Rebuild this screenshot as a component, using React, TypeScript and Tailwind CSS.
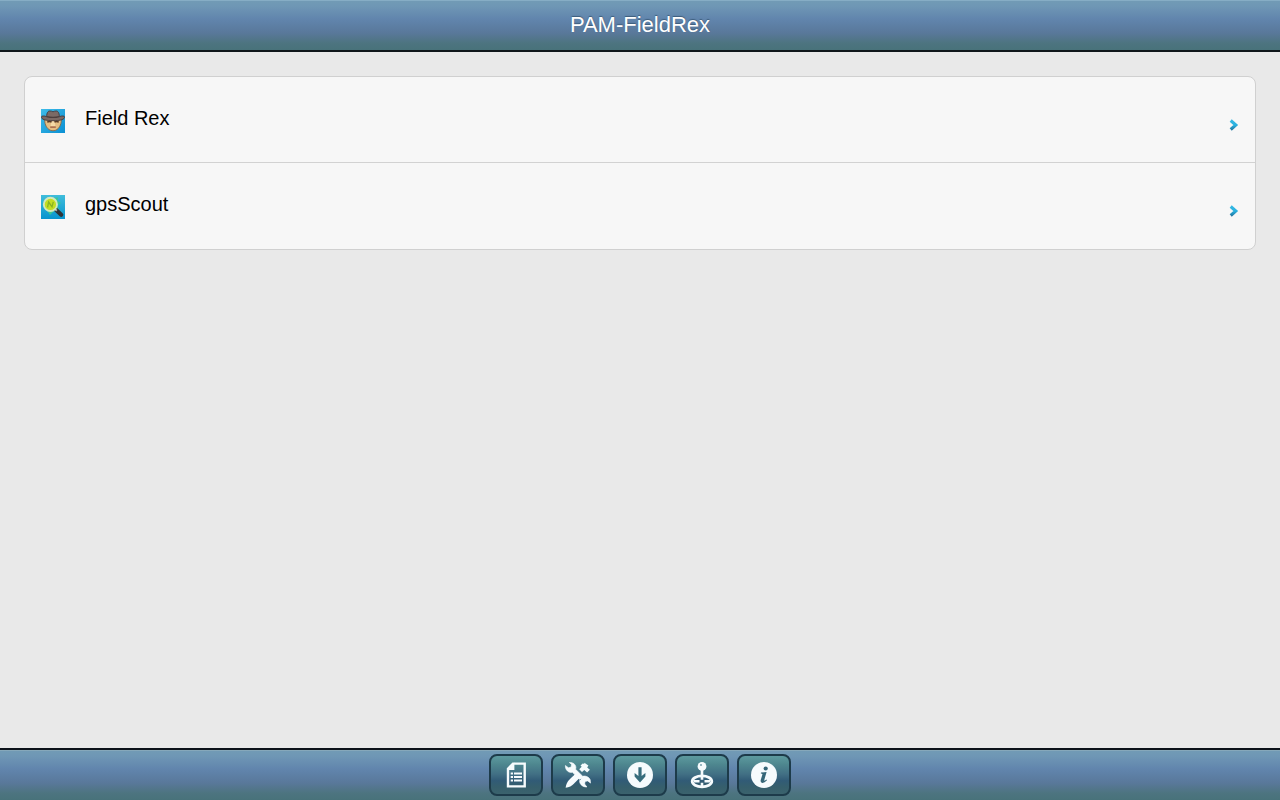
import type { ReactNode } from "react";

const barGradient =
  "bg-[linear-gradient(to_bottom,#729bb5_0%,#6f97b5_12%,#6185ad_38%,#59789a_66%,#4d7480_86%,#48727a_100%)]";

function CowboyIcon() {
  return (
    <svg width="24" height="24" viewBox="0 0 24 24" aria-hidden="true">
      <defs>
        <linearGradient id="sky" x1="0" y1="0" x2="1" y2="1">
          <stop offset="0" stopColor="#3fbce9" />
          <stop offset="1" stopColor="#0b90d3" />
        </linearGradient>
      </defs>
      <rect width="24" height="24" fill="url(#sky)" />
      <path d="M3.9 9H20.1C20.9 14.5 18.7 18.4 16.2 20.4C13.9 22.2 10.1 22.2 7.8 20.4C5.3 18.4 3.1 14.5 3.9 9Z" fill="#e3bd83" stroke="#86613c" strokeWidth=".8" />
      <path d="M10.4 12H13.6L14.4 17H9.6Z" fill="#f4d9a6" />
      <path d="M6.2 13.1Q8.5 11.8 10.6 13M13.4 13Q15.5 11.8 17.8 13.1" fill="none" stroke="#5b3c26" strokeWidth="1.5" />
      <path d="M9.2 18.2H14.8" stroke="#9c5840" strokeWidth="1.3" />
      <path d="M5.6 7.6C5.8 3.6 7 2 8.8 2Q10.6 2 12 2.8Q13.4 2 15.2 2C17 2 18.2 3.6 18.4 7.6L20.8 7Q24 6.4 23.5 8.7C22.3 11 18 11.7 12 11.7S1.7 11 .5 8.7Q0 6.4 3.2 7Z" fill="#7b6a65" stroke="#463b3d" strokeWidth=".9" />
      <path d="M5.7 7.6Q12 9.3 18.3 7.6" fill="none" stroke="#4c3e3d" strokeWidth="1.2" />
    </svg>
  );
}

function MagnifierIcon() {
  return (
    <svg width="24" height="24" viewBox="0 0 24 24" aria-hidden="true">
      <defs>
        <linearGradient id="water" x1="0" y1="0" x2="0" y2="1">
          <stop offset="0" stopColor="#40bddb" />
          <stop offset="1" stopColor="#0794ce" />
        </linearGradient>
      </defs>
      <rect width="24" height="24" fill="url(#water)" />
      <path d="M12 3L17 2.5L16.5 6L20 8L16 11L18 14L13 16L9 20L7 17Z" fill="#39c794" />
      <path d="M15.2 15L20.2 19.8" stroke="#2f3336" strokeWidth="4.2" strokeLinecap="round" />
      <path d="M13.4 13.4L15.8 15.8" stroke="#abb7b5" strokeWidth="2" />
      <circle cx="9.4" cy="9.4" r="6.6" fill="#c3de22" stroke="#d3e8bd" strokeWidth="1.9" />
      <path d="M6.6 12.3L7.6 7L11 11.8L12.3 6.8" fill="none" stroke="#86b322" strokeWidth="1.3" />
    </svg>
  );
}

function Chevron({ id }: { id: string }) {
  return (
    <svg width="10" height="14" viewBox="0 0 10 14" aria-hidden="true">
      <defs>
        <linearGradient id={id} x1="0" y1="0" x2="0" y2="1">
          <stop offset="0" stopColor="#35b7e3" />
          <stop offset=".5" stopColor="#29b2e0" />
          <stop offset="1" stopColor="#247ca6" />
        </linearGradient>
      </defs>
      <path d="M1.7 2.5L6.8 7L1.7 11.5" fill="none" stroke={`url(#${id})`} strokeWidth="3.1" />
    </svg>
  );
}

function Row({ icon, label, chevronId }: { icon: ReactNode; label: string; chevronId: string }) {
  return (
    <li className="h-[86px]">
      <a href="#" className="flex h-full items-start px-4 pt-[29px]">
        <span className="pt-[3px]">{icon}</span>
        <span className="ml-5 flex-1 text-[20px] leading-6 text-black">{label}</span>
        <span className="pt-3">
          <Chevron id={chevronId} />
        </span>
      </a>
    </li>
  );
}

function ToolButton({ label, children }: { label: string; children: ReactNode }) {
  return (
    <button
      type="button"
      aria-label={label}
      className="flex h-[42px] w-[54px] items-center justify-center rounded-lg border-2 border-[#1d3b4a] bg-[linear-gradient(to_bottom,#5d9a9f_0%,#4e878f_22%,#416f84_48%,#315b76_65%,#365f6c_82%,#3b626d_100%)]"
    >
      <svg width="30" height="30" viewBox="0 0 30 30" aria-hidden="true">
        {children}
      </svg>
    </button>
  );
}

export default function App() {
  return (
    <div className="flex min-h-screen flex-col bg-[#e9e9e9] font-['Liberation_Sans',Arial,sans-serif]">
      <header className={`flex h-[52px] items-center justify-center border-b-2 border-[#10171b] pb-px shadow-[inset_0_1px_0_#86adc5] ${barGradient}`}>
        <h1 className="text-[22px] leading-7 text-white [text-shadow:0_-1px_1px_#3c5c7b]">PAM-FieldRex</h1>
      </header>

      <main className="flex-1 p-6">
        <ul className="divide-y divide-[#d2d2d2] overflow-hidden rounded-lg border border-[#d0d0d0] bg-[#f7f7f7]">
          <Row icon={<CowboyIcon />} label="Field Rex" chevronId="chevron-rex" />
          <Row icon={<MagnifierIcon />} label="gpsScout" chevronId="chevron-scout" />
        </ul>
      </main>

      <footer className={`flex h-[52px] items-center justify-center gap-2 border-t-2 border-[#0c1219] shadow-[inset_0_1px_0_#86a8ba] ${barGradient}`}>
        <ToolButton label="Report">
          <path d="M12 3.6H23.7V26.4H7V8.8Z" fill="none" stroke="#f6fbfd" strokeWidth="2.4" />
          <path d="M13.4 2.6V10H6Z" fill="#f6fbfd" />
          <path d="M13 13.5H21M13 17H21M13 20.5H21" stroke="#f6fbfd" strokeWidth="2" />
          <path d="M9.7 13.5H12M9.7 17H12M9.7 20.5H12" stroke="#f6fbfd" strokeWidth="2" />
        </ToolButton>
        <ToolButton label="Settings">
          <path d="M21.4 2.8L25.4 5.4L24.2 7.4L26.9 9.7L24.1 12.4L21.3 10L19 12.1L16.2 9.2L18.7 6.8L17.5 5.4L20 3.2L21.1 4.2Z" fill="#f6fbfd" />
          <path d="M12 14L16.3 18.3L10.6 24C8.9 25.9 6.2 27.4 2.6 27.8C3.2 24.2 4.3 21.6 6 20Z" fill="#f6fbfd" />
          <path d="M2.4 5.5L5.5 7.8L8.1 7.1L8.5 4.5L6.3 2.5C10 2.2 12.8 4.4 12.9 7.6L12.6 9.3L19.7 16.2C22.7 15.5 25.9 16.8 27.2 19.7L27.5 23.1L24.7 20.9L22.1 21.4L21.7 24.1L23.9 27C20 27.1 17 24.8 16.6 21.4L16.8 19.4L9.4 12.3C5.7 13.2 2 9.9 2.4 5.5Z" fill="#f6fbfd" stroke="#f6fbfd" strokeWidth=".6" />
          <path d="M11.2 14.4L9.5 16M17.9 18.9L16.5 20.3" stroke="#4b7a8b" strokeWidth=".8" />
        </ToolButton>
        <ToolButton label="Download">
          <circle cx="15" cy="15" r="13" fill="#f6fbfd" />
          <path d="M13.4 7.3H16.6V16L20.4 13V16.6L15 22.4L9.6 16.6V13L13.4 16Z" fill="#376d7d" />
        </ToolButton>
        <ToolButton label="Position">
          <ellipse cx="15" cy="21.3" rx="9.8" ry="5.5" fill="none" stroke="#f6fbfd" strokeWidth="2.8" />
          <circle cx="15" cy="6.4" r="4.4" fill="#f6fbfd" />
          <circle cx="14" cy="5" r="1" fill="#7aa1ae" />
          <path d="M13.7 9H16.3V19.8H13.7ZM7 20H12.5V22.4H7ZM17.5 20H23V22.4H17.5ZM13.7 22.8H16.3V26H13.7Z" fill="#f6fbfd" />
        </ToolButton>
        <ToolButton label="Information">
          <circle cx="15" cy="15" r="13" fill="#f6fbfd" />
          <circle cx="16.7" cy="8.5" r="2.1" fill="#356678" />
          <path d="M12 12.5L17.6 11.9L15.4 19.5Q15 21 16 20.5L17.5 19.4L18 20.3Q15.4 23 13.3 22.9Q11 22.5 11.8 19.8L13.4 14.5Q13.7 13.5 11.8 13.5Z" fill="#356678" />
        </ToolButton>
      </footer>
    </div>
  );
}
